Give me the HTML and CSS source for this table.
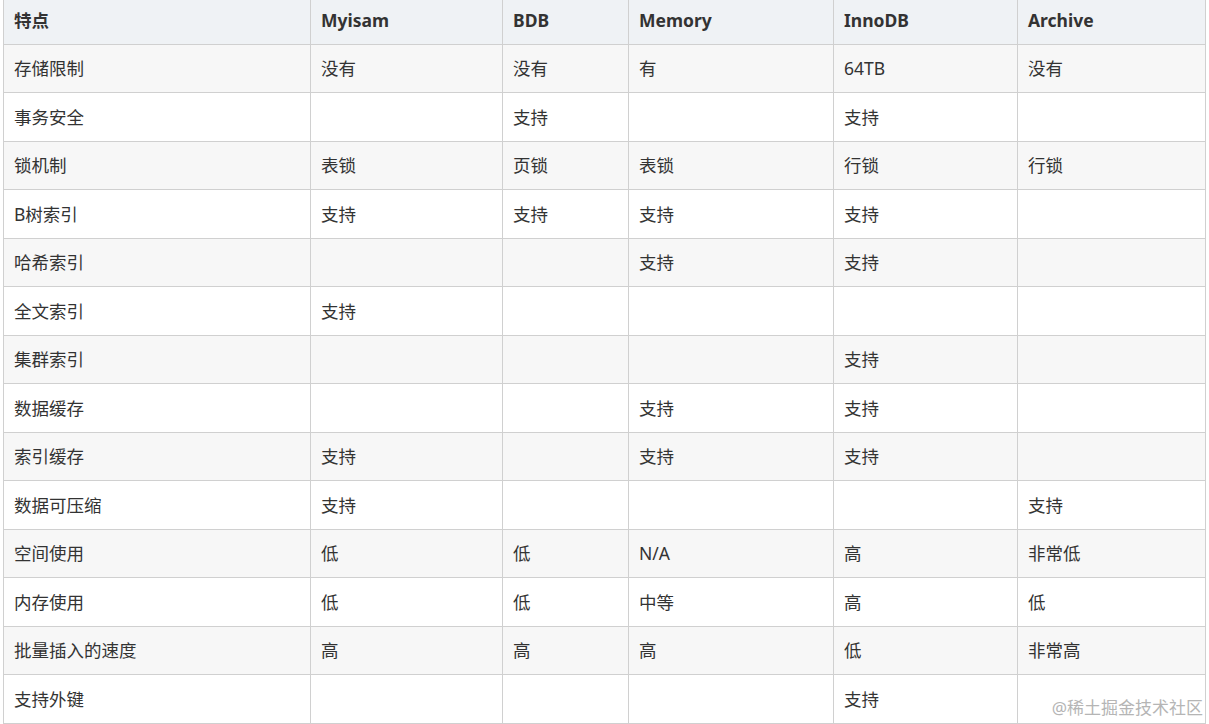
FILE: index.html
```html
<!DOCTYPE html>
<html lang="zh-CN">
<head>
<meta charset="utf-8">
<title>存储引擎对比</title>
<link rel="stylesheet" href="styles.css">
</head>
<body>
<div class="page">
  <table class="engines">
    <colgroup>
      <col class="c1"><col class="c2"><col class="c3"><col class="c4"><col class="c5"><col class="c6">
    </colgroup>
    <thead>
      <tr><th>特点</th><th>Myisam</th><th>BDB</th><th>Memory</th><th>InnoDB</th><th>Archive</th></tr>
    </thead>
    <tbody>
      <tr><td>存储限制</td><td>没有</td><td>没有</td><td>有</td><td>64TB</td><td>没有</td></tr>
      <tr><td>事务安全</td><td></td><td>支持</td><td></td><td>支持</td><td></td></tr>
      <tr><td>锁机制</td><td>表锁</td><td>页锁</td><td>表锁</td><td>行锁</td><td>行锁</td></tr>
      <tr><td>B树索引</td><td>支持</td><td>支持</td><td>支持</td><td>支持</td><td></td></tr>
      <tr><td>哈希索引</td><td></td><td></td><td>支持</td><td>支持</td><td></td></tr>
      <tr><td>全文索引</td><td>支持</td><td></td><td></td><td></td><td></td></tr>
      <tr><td>集群索引</td><td></td><td></td><td></td><td>支持</td><td></td></tr>
      <tr><td>数据缓存</td><td></td><td></td><td>支持</td><td>支持</td><td></td></tr>
      <tr><td>索引缓存</td><td>支持</td><td></td><td>支持</td><td>支持</td><td></td></tr>
      <tr><td>数据可压缩</td><td>支持</td><td></td><td></td><td></td><td>支持</td></tr>
      <tr><td>空间使用</td><td>低</td><td>低</td><td>N/A</td><td>高</td><td>非常低</td></tr>
      <tr><td>内存使用</td><td>低</td><td>低</td><td>中等</td><td>高</td><td>低</td></tr>
      <tr><td>批量插入的速度</td><td>高</td><td>高</td><td>高</td><td>低</td><td>非常高</td></tr>
      <tr><td>支持外键</td><td></td><td></td><td></td><td>支持</td><td></td></tr>
    </tbody>
  </table>
  <div class="watermark">@稀土掘金技术社区</div>
</div>
</body>
</html>
```

FILE: styles.css
```css
html, body {
  margin: 0;
  padding: 0;
  background: #ffffff;
}
body {
  font-family: "Noto Sans", "Noto Sans CJK SC", sans-serif;
  color: #333333;
  font-size: 17.5px;
}
.page {
  position: relative;
  width: 1209px;
  height: 724px;
  padding-left: 3px;
  box-sizing: border-box;
  overflow: hidden;
}
.engines {
  border-collapse: collapse;
  table-layout: fixed;
  width: 1202px;
}
.c1 { width: 307px; }
.c2 { width: 192px; }
.c3 { width: 126px; }
.c4 { width: 205px; }
.c5 { width: 184px; }
.c6 { width: 188px; }
.engines th,
.engines td {
  border: 1px solid #d0d0d0;
  padding: 0 10px;
  text-align: left;
  vertical-align: middle;
  white-space: nowrap;
  line-height: 24px;
}
.engines th {
  border-top: none;
  height: 44px;
  padding-bottom: 4px;
  box-sizing: border-box;
  background: #eff2f5;
  font-weight: 700;
  font-size: 17.5px;
  color: #333333;
}
.engines td {
  height: 47.5px;
  font-size: 17.5px;
}
.engines tbody tr:nth-child(odd) td {
  background: #f7f7f7;
}
.watermark {
  position: absolute;
  right: 6px;
  bottom: 5px;
  font-size: 17px;
  color: #b5b5b5;
  text-shadow: 0 0 2px #ffffff;
}
```
